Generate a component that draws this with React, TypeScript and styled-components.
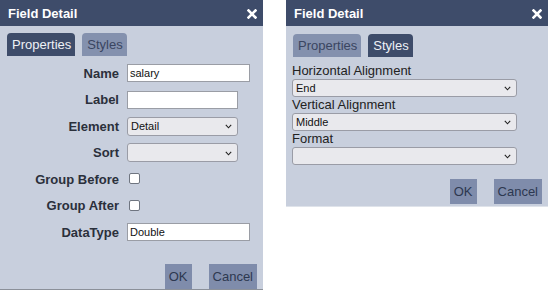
import React from 'react';
import styled, { createGlobalStyle } from 'styled-components';

const GlobalStyle = createGlobalStyle`
  html, body {
    margin: 0;
    padding: 0;
    background: #ffffff;
    font-family: "Liberation Sans", Arial, sans-serif;
  }
`;

const Page = styled.div`
  display: flex;
  align-items: flex-start;
  gap: 23px;
`;

const Dialog = styled.div<{ $width: number; $height?: number }>`
  width: ${p => p.$width}px;
  height: ${p => (p.$height ? `${p.$height}px` : 'auto')};
  box-sizing: border-box;
  background: #c8cfdd;
  border-bottom: 1px solid ${p => (p.$height ? '#8b9099' : '#dfe3ea')};
  display: flex;
  flex-direction: column;
`;

const Header = styled.div`
  height: 26px;
  background: #3e4c6a;
  display: flex;
  align-items: center;
  justify-content: space-between;
  padding: 0 6px 0 8px;
  flex-shrink: 0;
`;

const Title = styled.span`
  color: #ffffff;
  font-weight: bold;
  font-size: 13px;
`;

const Close = styled.svg`
  width: 10px;
  height: 10px;
  margin-top: 1px;
`;

const TabRow = styled.div<{ $top: number }>`
  display: flex;
  gap: 7px;
  padding: ${p => p.$top}px 6px 0 7px;
`;

const Tab = styled.div<{ $active?: boolean }>`
  height: 23px;
  line-height: 23px;
  padding: 0 4px 0 5px;
  font-size: 13px;
  border-radius: 4px 4px 0 0;
  background: ${p => (p.$active ? '#3e4c6a' : '#8491ae')};
  color: ${p => (p.$active ? '#eef1f6' : '#3a4561')};
`;

const Form = styled.div`
  display: grid;
  grid-template-columns: 119px 1fr;
  grid-auto-rows: 26.5px;
  column-gap: 8px;
  padding-top: 4px;
  align-items: center;
`;

const Label = styled.label`
  text-align: right;
  font-weight: bold;
  font-size: 13px;
  color: #2b303b;
`;

const TextInput = styled.input<{ $width: number }>`
  width: ${p => p.$width}px;
  height: 18px;
  box-sizing: border-box;
  border: 1px solid #9a9da5;
  background: #ffffff;
  font-family: "Liberation Sans", Arial, sans-serif;
  font-size: 11px;
  color: #111;
  padding: 0 2px;
  margin: 0;
  outline: none;
`;

const SelectWrap = styled.div<{ $width: number; $height: number }>`
  position: relative;
  display: block;
  width: ${p => p.$width}px;
  height: ${p => p.$height}px;
`;

const Select = styled.select`
  display: block;
  appearance: none;
  width: 100%;
  height: 100%;
  box-sizing: border-box;
  border: 1px solid #9a9ca6;
  border-radius: 3px;
  background: #e9e9ed;
  font-family: "Liberation Sans", Arial, sans-serif;
  font-size: 11px;
  color: #111;
  padding: 0 3px;
  margin: 0;
  outline: none;
`;

const Chevron = styled.svg`
  position: absolute;
  right: 6px;
  top: 50%;
  margin-top: -2px;
  width: 7px;
  height: 5px;
  pointer-events: none;
`;

const Check = styled.input`
  appearance: none;
  width: 11px;
  height: 11px;
  margin: 0 0 0 2px;
  box-sizing: border-box;
  border: 1px solid #6f7580;
  border-radius: 2px;
  background: #ffffff;
`;

const Stack = styled.div`
  display: flex;
  flex-direction: column;
  padding: 6px 6px 0 6px;
`;

const PlainLabel = styled.div`
  font-size: 13px;
  line-height: 16px;
  height: 16px;
  color: #222;
`;

const Footer = styled.div<{ $top: number; $bottom: number }>`
  display: flex;
  justify-content: flex-end;
  gap: 17px;
  margin-top: ${p => p.$top}px;
  padding: 0 6px ${p => p.$bottom}px 0;
`;

const Button = styled.button`
  height: 25px;
  padding: 0 4px;
  border: none;
  background: #7f8cab;
  color: #2d3850;
  font-family: "Liberation Sans", Arial, sans-serif;
  font-size: 13px;
  margin: 0;
`;

const Spacer = styled.div`
  flex: 1;
`;

function Dropdown({ width, height, value }: { width: number; height: number; value: string }) {
  return (
    <SelectWrap $width={width} $height={height}>
      <Select defaultValue={value}>
        <option value={value}>{value}</option>
      </Select>
      <Chevron viewBox="0 0 7 5">
        <path d="M0.8 0.8 L3.5 3.8 L6.2 0.8" fill="none" stroke="#222" strokeWidth="1.1" />
      </Chevron>
    </SelectWrap>
  );
}

function DialogHeader() {
  return (
    <Header>
      <Title>Field Detail</Title>
      <Close viewBox="0 0 10 10">
        <path d="M1.5 1.5 L8.5 8.5 M8.5 1.5 L1.5 8.5" stroke="#fff" strokeWidth="2.6" strokeLinecap="square" />
      </Close>
    </Header>
  );
}

export default function App() {
  return (
    <>
      <GlobalStyle />
      <Page>
        <Dialog $width={263} $height={290}>
          <DialogHeader />
          <TabRow $top={7}>
            <Tab $active>Properties</Tab>
            <Tab>Styles</Tab>
          </TabRow>
          <Form>
            <Label>Name</Label>
            <TextInput $width={123} defaultValue="salary" />
            <Label>Label</Label>
            <TextInput $width={111} defaultValue="" />
            <Label>Element</Label>
            <Dropdown width={111} height={19} value="Detail" />
            <Label>Sort</Label>
            <Dropdown width={111} height={19} value="" />
            <Label>Group Before</Label>
            <div><Check type="checkbox" /></div>
            <Label>Group After</Label>
            <div><Check type="checkbox" /></div>
            <Label>DataType</Label>
            <TextInput $width={123} defaultValue="Double" />
          </Form>
          <Spacer />
          <Footer $top={0} $bottom={0}>
            <Button>OK</Button>
            <Button>Cancel</Button>
          </Footer>
        </Dialog>
        <Dialog $width={262}>
          <DialogHeader />
          <TabRow $top={8}>
            <Tab>Properties</Tab>
            <Tab $active>Styles</Tab>
          </TabRow>
          <Stack>
            <PlainLabel>Horizontal Alignment</PlainLabel>
            <Dropdown width={225} height={18} value="End" />
            <PlainLabel>Vertical Alignment</PlainLabel>
            <Dropdown width={225} height={18} value="Middle" />
            <PlainLabel>Format</PlainLabel>
            <Dropdown width={225} height={18} value="" />
          </Stack>
          <Footer $top={14} $bottom={2}>
            <Button>OK</Button>
            <Button>Cancel</Button>
          </Footer>
        </Dialog>
      </Page>
    </>
  );
}
